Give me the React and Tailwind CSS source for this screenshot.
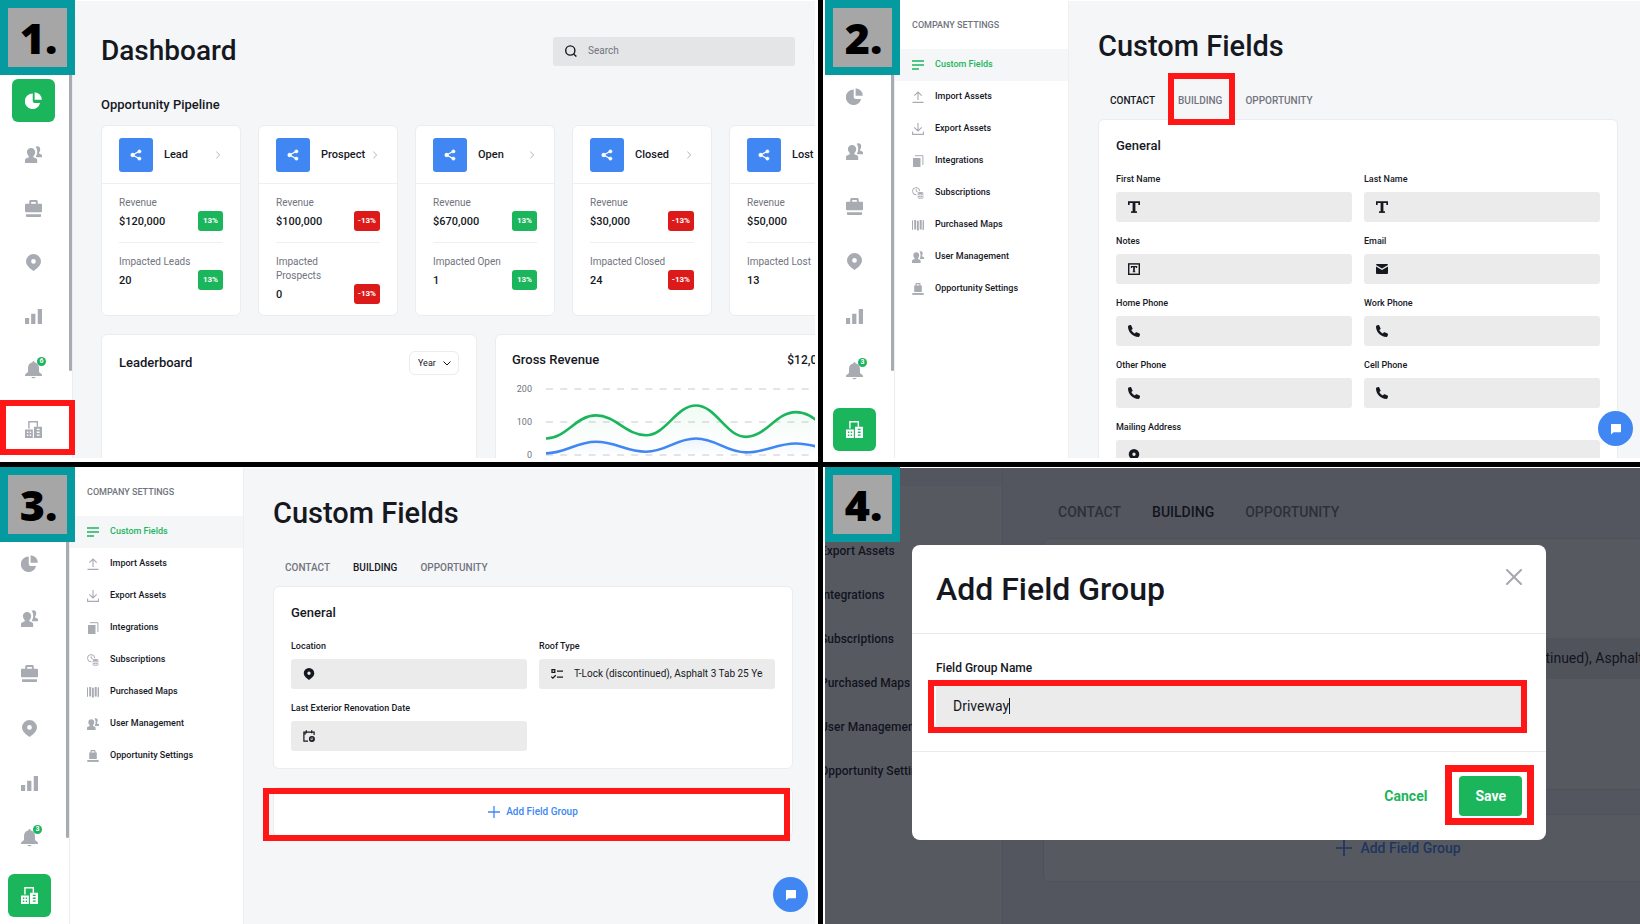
import { useId } from "react";

/* ---------- icons ---------- */

function PieIcon({ className }) {
  return (
    <svg viewBox="0 0 18 18" className={className} fill="currentColor" aria-hidden="true">
      <path d="M8.2 1.6A8.2 8.2 0 1 0 16 11.6H10.4A2.2 2.2 0 0 1 8.2 9.4Z" />
      <path d="M10.2 0.2A8 8 0 0 1 17.8 8.2H10.2Z" />
    </svg>
  );
}

function UsersIcon({ className }) {
  return (
    <svg viewBox="0 0 18 18" className={className} fill="currentColor" aria-hidden="true">
      <path d="M6.4 2C9 2 10.8 3.8 10.8 6.2c0 2-.8 3.700-1.900 4.600v1.200l3 1.200c.7.3 1 .8 1 1.600V18H0v-3.200c0-.8.400-1.300 1.100-1.600l2.900-1.200v-1.200C2.900 9.900 2 8.200 2 6.200 2 3.800 3.800 2 6.400 2Z" />
      <path d="M11.200.9c.5-.4 1.200-.6 1.900-.6 1.900 0 3 1.300 3 3.200 0 1.500-.5 2.700-1.200 3.400v1l2.300 1c.5.200.8.600.8 1.200V11.900h-5.600l-1-.500c1-1.400 1.500-3.200 1.500-5.200 0-2.100-.600-3.900-1.700-5.300Z" />
    </svg>
  );
}

function BriefcaseIcon({ className }) {
  return (
    <svg viewBox="0 0 18 18" className={className} fill="currentColor" aria-hidden="true">
      <path d="M4.500 4V1.500C4.500.6 5.100 0 6 0h6c.9 0 1.500.6 1.500 1.500V4H17c.6 0 1 .400 1 1v7c0 .600-.4 1-1 1H1c-.6 0-1-.4-1-1V5c0-.6.4-1 1-1Zm2 0h5V2h-5Z" fillRule="evenodd" />
      <path d="M1 15h16v2c0 .6-.4 1-1 1H2c-.6 0-1-.4-1-1Z" />
    </svg>
  );
}

function PinIcon({ className }) {
  return (
    <svg viewBox="0 0 18 18" className={className} fill="currentColor" aria-hidden="true">
      <path fillRule="evenodd" d="M9 0a7.900 7.900 0 0 1 7.900 7.900c0 4.300-4.100 7.300-7.900 10.100C5.200 15.200 1.100 12.200 1.100 7.900A7.900 7.900 0 0 1 9 0Zm0 5.400a2.500 2.500 0 1 0 0 5 2.500 2.500 0 0 0 0-5Z" />
    </svg>
  );
}

function BarsIcon({ className }) {
  return (
    <svg viewBox="0 0 18 18" className={className} fill="currentColor" aria-hidden="true">
      <path d="M0 10.500h4.400V17H0ZM6.500 6H11v11H6.500ZM13.500 1H18v16h-4.500Z" />
    </svg>
  );
}

function BellIcon({ className }) {
  return (
    <svg viewBox="0 1 18 18" className={className} fill="currentColor" overflow="visible" aria-hidden="true">
      <path d="M8 .8C8 .3 8.400 0 9 0s1 .3 1 .8v.5c2.800.5 4.800 2.800 4.800 5.700v4.600l2.600 2.200c.4.300.6.700.6 1.200v.8H0V15c0-.500.2-.9.6-1.200l2.600-2.200V7c0-2.900 2-5.200 4.800-5.700Z" />
      <path d="M6.600 16.800h4.800A2.500 2.500 0 0 1 9 18.200a2.500 2.500 0 0 1-2.400-1.400Z" />
    </svg>
  );
}

function BuildingIcon({ className }) {
  return (
    <svg viewBox="0 0 18 18" className={className} fill="currentColor" aria-hidden="true">
      <path d="M3.400 0h10.400v6h-1.500V1.500H4.900V8H3.400Z" />
      <path fillRule="evenodd" d="M0 9h8.300v9H0Zm2 2.200v1.600h1.500v-1.600Zm3 0v1.600h1.500v-1.600Zm-3 3v1.600h1.500v-1.600Zm3 0v1.600h1.500v-1.600Z" />
      <path fillRule="evenodd" d="M9.500 6H18v12H9.500Zm3 2.200v1.400h3V8.200Zm0 3v1.400h3v-1.400Zm0 3v1.400h3v-1.400Z" />
    </svg>
  );
}

function LinesIcon({ className }) {
  return (
    <svg viewBox="0 0 12 12" className={className} stroke="currentColor" strokeWidth="1.400" aria-hidden="true">
      <path d="M0 2h12M0 6h12M0 10h7" />
    </svg>
  );
}

function UploadIcon({ className }) {
  return (
    <svg viewBox="0 0 12 12" className={className} fill="none" stroke="currentColor" strokeWidth="1.100" aria-hidden="true">
      <path d="M.5 11.400h11M6 9V1M2.300 4.600 6 1l3.700 3.600" />
    </svg>
  );
}

function DownloadIcon({ className }) {
  return (
    <svg viewBox="0 0 12 12" className={className} fill="none" stroke="currentColor" strokeWidth="1.100" aria-hidden="true">
      <path d="M.6 8.500v2.900h10.800V8.500M6 0v7.500M2.300 4.300 6 8l3.700-3.700" />
    </svg>
  );
}

function CopyIcon({ className }) {
  return (
    <svg viewBox="0 0 12 12" className={className} aria-hidden="true">
      <path d="M1 3h7.500v9H1Z" fill="currentColor" />
      <path d="M3 .700h7.900V10" fill="none" stroke="currentColor" strokeWidth="1" />
    </svg>
  );
}

function CoinsIcon({ className }) {
  return (
    <svg viewBox="0 0 12 12" className={className} fill="none" stroke="currentColor" strokeWidth="1" aria-hidden="true">
      <path d="M4.400 7.800A3.600 3.600 0 1 1 7.700 4.200M4.200 2.300v2l1.500.6" />
      <ellipse cx="8.500" cy="6" rx="3" ry="1.100" fill="currentColor" stroke="none" />
      <path d="M5.600 7.300c1 .8 4.800.8 5.900 0M5.600 9c1 .9 4.800.9 5.900 0M5.600 10.600c1 .9 4.800.9 5.900 0" />
    </svg>
  );
}

function MapIcon({ className }) {
  return (
    <svg viewBox="0 0 12 12" className={className} fill="currentColor" aria-hidden="true">
      <path d="M0 1.800 1 1v9.500l-1 .8ZM2.200 1h2v9.500h-2ZM5 1.800h1.800v9.700H5ZM7.700 1h2v9.500h-2ZM10.600 1.800 12 1v9.500l-1.400.9Z" />
    </svg>
  );
}

function BagIcon({ className }) {
  return (
    <svg viewBox="0 0 12 12" className={className} fill="currentColor" aria-hidden="true">
      <path fillRule="evenodd" d="M3.500 2.500V.8c0-.4.300-.8.800-.8h3.400c.5 0 .8.400.8.800v1.700h1.300V9H2.200V2.500Zm1.200 0h2.600V1.200H4.700Z" />
      <path d="M.3 10h11.400v1.900H.3Z" />
    </svg>
  );
}

function TextIcon({ className }) {
  return (
    <svg viewBox="0 0 12 12" className={className} fill="none" stroke="currentColor" aria-hidden="true">
      <path d="M.8 4V1.200h10.400V4" strokeWidth="1.700" />
      <path d="M6 1v10" strokeWidth="2.800" />
      <path d="M3 11.100h6" strokeWidth="1.600" />
    </svg>
  );
}

function TextBoxIcon({ className }) {
  return (
    <svg viewBox="0 0 12 12" className={className} fill="none" stroke="currentColor" aria-hidden="true">
      <rect x=".7" y=".9" width="10.600" height="10.400" strokeWidth="1.400" />
      <path d="M3.400 4.900V3.600h5.200v1.300M4.700 8.800h2.600" strokeWidth="1.100" />
      <path d="M6 3.500v5.300" strokeWidth="1.700" />
    </svg>
  );
}

function MailIcon({ className }) {
  return (
    <svg viewBox="0 0 12 12" className={className} fill="currentColor" aria-hidden="true">
      <path d="M.9 1h10.200c.5 0 .9.400.9.900L6 5.400 0 1.900C0 1.400.4 1 .9 1Z" />
      <path d="m0 3.400 6 3.500 6-3.500v6.700c0 .5-.4.900-.9.900H.9c-.5 0-.9-.4-.9-.9Z" />
    </svg>
  );
}

function PhoneIcon({ className }) {
  return (
    <svg viewBox="0 0 12 12" className={className} fill="currentColor" aria-hidden="true">
      <path d="M3.100.2 4.500 3.300c.2.400.1.700-.2 1l-1 .8c.700 1.500 2 2.700 3.500 3.500l.9-1.100c.3-.300.6-.4 1-.2l2.800 1.300c.400.2.6.6.500 1l-.4 1.500c-.1.400-.5.800-1 .8C4.800 12 0 7.200 0 1.500 0 1 .3.600.8.500L2.200 0c.4 0 .7-.1.900.2Z" />
    </svg>
  );
}

function ChecklistIcon({ className }) {
  return (
    <svg viewBox="0 0 12 12" className={className} fill="none" stroke="currentColor" strokeWidth="1.300" aria-hidden="true">
      <path d="M1 1.700h2.800v2.700H1ZM.2 8.600 1.900 10.200 4.700 7.200M6 3.200h6M6 9.200h6" />
    </svg>
  );
}

function CalendarIcon({ className }) {
  return (
    <svg viewBox="0 0 12 12" className={className} fill="none" stroke="currentColor" strokeWidth="1.200" aria-hidden="true">
      <path d="M5 11.200H.9V2.100H11.100V5M.9 3.800h2M3.300.3v3M8.700.3v3" />
      <circle cx="8.900" cy="8.900" r="2.200" strokeWidth="1.600" />
      <path d="M8.700 7.600v1.500h1.500" strokeWidth=".8" />
    </svg>
  );
}

function ShareIcon({ className }) {
  return (
    <svg viewBox="0 0 12 12" className={className} fill="currentColor" stroke="currentColor" aria-hidden="true">
      <path d="M9.300 2.300 2.700 6l6.600 3.700" fill="none" strokeWidth="1.300" />
      <circle cx="9.400" cy="2.400" r="1.700" strokeWidth=".4" />
      <circle cx="2.600" cy="6" r="1.900" strokeWidth=".4" />
      <circle cx="9.400" cy="9.600" r="1.700" strokeWidth=".4" />
    </svg>
  );
}

function SearchIcon({ className }) {
  return (
    <svg viewBox="0 0 12 12" className={className} fill="none" stroke="currentColor" strokeWidth="1.400" aria-hidden="true">
      <circle cx="5.300" cy="5.500" r="4.600" />
      <path d="m8.600 8.900 2.800 2.600" />
    </svg>
  );
}

function PlusIcon({ className }) {
  return (
    <svg viewBox="0 0 12 12" className={className} stroke="currentColor" strokeWidth="1.300" aria-hidden="true">
      <path d="M6 0v12M0 6h12" />
    </svg>
  );
}

function ChatIcon({ className }) {
  return (
    <svg viewBox="0 0 12 12" className={className} fill="currentColor" aria-hidden="true">
      <path d="M1.600 1h8.800c.4 0 .6.200.6.600v7c0 .4-.2.600-.6.600H3.500L1 11.500V1.600c0-.4.200-.6.600-.6Z" />
    </svg>
  );
}

/* ---------- shared parts ---------- */

function StepBadge({ children }) {
  return (
    <div className="absolute left-0 top-0 z-20 flex size-[75px] items-center justify-center border-8 border-[#049a9f] bg-[#a6a6a6] pl-[2px] font-['Open_Sans',sans-serif] text-[43px] leading-none font-extrabold text-black">
      {children}
    </div>
  );
}

function Highlight({ className }) {
  return <div className={`pointer-events-none absolute z-10 border-[#ff1616] ${className}`} />;
}

function ChatButton() {
  return (
    <button
      type="button"
      aria-label="Chat"
      className="absolute right-[7px] bottom-3 flex size-[35px] items-center justify-center rounded-full bg-[#4087f4] text-white"
    >
      <ChatIcon className="size-3" />
    </button>
  );
}

const railItems = [
  ["Dashboard", PieIcon],
  ["Contacts", UsersIcon],
  ["Jobs", BriefcaseIcon],
  ["Locations", PinIcon],
  ["Reports", BarsIcon],
  ["Notifications", BellIcon],
];

function RailButton({ label, Icon, active, count }) {
  return (
    <button
      type="button"
      aria-label={label}
      className={`relative flex size-[43px] shrink-0 items-center justify-center rounded-md ${
        active ? "bg-[#1bb55c] text-white" : "text-[#a9abb3]"
      }`}
    >
      <Icon className="size-[17px]" />
      {count && (
        <span className="absolute top-2 left-[25px] flex size-[9px] items-center justify-center rounded-full bg-[#1bb55c] text-[7px] leading-none font-bold text-white">
          {count}
        </span>
      )}
    </button>
  );
}

function Rail({ active, count, className, listClassName }) {
  return (
    <nav className={`relative shrink-0 border-r border-[#ebecee] bg-white ${className}`}>
      <div className={`flex flex-col ${listClassName}`}>
        {railItems.map(([label, Icon]) => (
          <RailButton
            key={label}
            label={label}
            Icon={Icon}
            active={active === label}
            count={label === "Notifications" ? count : null}
          />
        ))}
      </div>
      <div className="absolute bottom-[7px]">
        <RailButton label="Company" Icon={BuildingIcon} active={active === "Company"} />
      </div>
      <div className="absolute top-0 right-0 h-[370px] w-[3px] rounded-b-full bg-[#a9abb3]" />
    </nav>
  );
}

/* ---------- dashboard ---------- */

const stages = [
  { name: "Lead", revenue: "$120,000", label: "Impacted Leads", value: "20", change: "13%" },
  { name: "Prospect", revenue: "$100,000", label: "Impacted Prospects", value: "0", change: "-13%" },
  { name: "Open", revenue: "$670,000", label: "Impacted Open", value: "1", change: "13%" },
  { name: "Closed", revenue: "$30,000", label: "Impacted Closed", value: "24", change: "-13%" },
  { name: "Lost", revenue: "$50,000", label: "Impacted Lost", value: "13" },
];

function Metric({ label, value, change, className }) {
  return (
    <div className={`flex items-end justify-between ${className}`}>
      <div>
        <div className="text-[10px] leading-[14px] text-[#71747e]">{label}</div>
        <div className="mt-[3px] text-[11px] leading-[18px] font-medium">{value}</div>
      </div>
      {change && (
        <span
          className={`shrink-0 rounded-[3px] text-[8px] leading-5 font-bold text-white ${
            change.startsWith("-") ? "bg-[#dc1a1a] px-1" : "bg-[#1bb55c] px-[5px]"
          }`}
        >
          {change}
        </span>
      )}
    </div>
  );
}

function StageCard({ stage }) {
  return (
    <article className="w-[140px] shrink-0 rounded-md border border-[#ebecee] bg-white">
      <header className="flex h-[58px] items-center border-b border-[#efeff1] pr-5 pl-[17px]">
        <span className="flex size-[34px] shrink-0 items-center justify-center rounded-[3px] bg-[#4087f4] text-white">
          <ShareIcon className="size-3" />
        </span>
        <h3 className="ml-[11px] text-[11px] leading-4 font-medium">{stage.name}</h3>
        <svg viewBox="0 0 4 8" className="ml-auto h-2 w-1 text-[#b5b6bb]" fill="none" stroke="currentColor" aria-hidden="true">
          <path d="M.3.500 3.600 4 .3 7.500" />
        </svg>
      </header>
      <div className="px-[17px]">
        <Metric className="border-b border-[#efeff1] pt-3 pb-[11px]" label="Revenue" value={stage.revenue} change={stage.change} />
        <Metric className="pt-3 pb-[11px]" label={stage.label} value={stage.value} change={stage.change} />
      </div>
    </article>
  );
}

const green = [50, 120, 60, 150, 55, 130, 60];
const blue = [5, 40, 10, 50, 8, 35, 10];

function curve(values) {
  const x = (i) => 34 + i * 50;
  const y = (v) => 86 - v * 0.33;
  return values
    .map((v, i) =>
      i === 0
        ? `M${x(0)} ${y(v)}`
        : `C${x(i) - 30} ${y(values[i - 1])} ${x(i) - 20} ${y(v)} ${x(i)} ${y(v)}`
    )
    .join("");
}

function RevenueChart() {
  return (
    <svg viewBox="0 0 342 96" className="block h-24 w-[342px] overflow-visible" aria-label="Gross revenue">
      <defs>
        <linearGradient id="greenFade" x1="0" y1="0" x2="0" y2="1">
          <stop offset="0" stopColor="#1bb55c" stopOpacity=".06" />
          <stop offset="1" stopColor="#1bb55c" stopOpacity="0" />
        </linearGradient>
        <linearGradient id="blueFade" x1="0" y1="0" x2="0" y2="1">
          <stop offset="0" stopColor="#4087f4" stopOpacity=".08" />
          <stop offset="1" stopColor="#4087f4" stopOpacity="0" />
        </linearGradient>
      </defs>
      {[200, 100, 0].map((tick, i) => (
        <g key={tick}>
          <text x="20" y={23 + i * 33} textAnchor="end" className="fill-[#71747e] text-[9px]">
            {tick}
          </text>
          <path d={`M34 ${20 + i * 33}H342`} stroke="#c9cacd" strokeDasharray="7 7.200" />
        </g>
      ))}
      <path d={`${curve(green)}V86H34Z`} fill="url(#greenFade)" />
      <path d={`${curve(blue)}V86H34Z`} fill="url(#blueFade)" />
      <path d={curve(green)} fill="none" stroke="#1bb55c" strokeWidth="2.600" />
      <path d={curve(blue)} fill="none" stroke="#4087f4" strokeWidth="2.600" />
    </svg>
  );
}

function Dashboard() {
  return (
    <section className="relative min-w-0 overflow-hidden bg-white pt-px pr-[3px] pb-1">
      <div className="relative flex h-full overflow-hidden">
        <Rail active="Dashboard" count="6" className="w-[73px] pl-3" listClassName="gap-[11px] pt-[78px]" />
        <main className="min-w-0 flex-1 overflow-hidden bg-[#f5f6f8] pt-8 pl-7">
          <header className="flex h-9 items-center">
            <h1 className="text-[28px] leading-9 font-medium">Dashboard</h1>
            <label className="ml-auto flex h-[29px] w-[242px] items-center rounded-[3px] bg-[#e4e5e7] px-3">
              <SearchIcon className="size-3 shrink-0" />
              <input
                type="search"
                aria-label="Search"
                placeholder="Search"
                className="ml-[11px] w-full bg-transparent text-[10px] leading-4 outline-none placeholder:text-[#71747e]"
              />
            </label>
            <button
              type="button"
              aria-label="More"
              className="-mr-[27px] ml-[18px] size-[29px] shrink-0 rounded-md border border-[#ebecee] bg-white"
            />
          </header>
          <h2 className="mt-[27px] text-[13px] leading-[18px] font-medium">Opportunity Pipeline</h2>
          <div className="mt-[11px] flex gap-[17px]">
            {stages.map((stage) => (
              <StageCard key={stage.name} stage={stage} />
            ))}
          </div>
          <div className="mt-[18px] flex gap-[18px]">
            <article className="h-64 w-[376px] shrink-0 rounded-md border border-[#ebecee] bg-white px-[17px] py-4">
              <header className="flex h-6 items-center justify-between">
                <h2 className="text-[13px] leading-[18px] font-medium">Leaderboard</h2>
                <label className="relative">
                  <select
                    aria-label="Period"
                    className="block h-6 w-[50px] appearance-none rounded-md border border-[#ebecee] bg-white pl-2 text-[9px] leading-4 outline-none"
                  >
                    <option>Year</option>
                  </select>
                  <svg viewBox="0 0 8 5" className="pointer-events-none absolute top-[10px] right-2 h-[5px] w-2" fill="none" stroke="currentColor" aria-hidden="true">
                    <path d="M.5.500 4 4 7.500.500" />
                  </svg>
                </label>
              </header>
            </article>
            <article className="h-64 w-[376px] shrink-0 rounded-md border border-[#ebecee] bg-white p-4">
              <header className="flex items-center justify-between leading-[18px] font-medium">
                <h2 className="text-[13px]">Gross Revenue</h2>
                <span className="text-[12px]">$12,000,000</span>
              </header>
              <RevenueChart />
            </article>
          </div>
        </main>
        <Highlight className="top-[399px] left-0 h-[55px] w-[75px] border-[6px]" />
      </div>
      <StepBadge>1.</StepBadge>
    </section>
  );
}

/* ---------- settings ---------- */

const menuItems = [
  ["Custom Fields", LinesIcon],
  ["Import Assets", UploadIcon],
  ["Export Assets", DownloadIcon],
  ["Integrations", CopyIcon],
  ["Subscriptions", CoinsIcon],
  ["Purchased Maps", MapIcon],
  ["User Management", UsersIcon],
  ["Opportunity Settings", BagIcon],
];

const tabs = ["CONTACT", "BUILDING", "OPPORTUNITY"];

function SettingsMenu() {
  return (
    <aside className="w-[174px] shrink-0 border-r border-[#efeff1] bg-white pt-[18px]">
      <h2 className="pl-[17px] text-[9px] leading-3 font-medium text-[#71747e]">COMPANY SETTINGS</h2>
      <ul className="mt-[18px]">
        {menuItems.map(([label, Icon], i) => (
          <li key={label}>
            <a
              href="#"
              className={`flex h-8 items-center gap-[11px] pl-[17px] text-[9px] font-medium ${
                i === 0 ? "bg-[#f5f6f8] text-[#1bb55c]" : ""
              }`}
            >
              <Icon className={`size-3 ${i === 0 ? "" : "text-[#a9abb3]"}`} />
              {label}
            </a>
          </li>
        ))}
      </ul>
    </aside>
  );
}

function Field({ label, Icon, value, wide }) {
  const id = useId();
  return (
    <div className={wide ? "col-span-2" : ""}>
      <label htmlFor={id} className="block text-[9px] leading-3 font-medium">
        {label}
      </label>
      <div className="mt-[7px] flex h-[30px] items-center gap-[11px] rounded-[3px] bg-[#ebebeb] px-3">
        <Icon className="size-3 shrink-0" />
        <input id={id} defaultValue={value} className="w-full min-w-0 bg-transparent text-[10px] leading-4 outline-none" />
      </div>
    </div>
  );
}

function Settings({ step, tab, fields, addGroup, className, children }) {
  return (
    <section className={`relative min-w-0 overflow-hidden bg-white pt-px ${className}`}>
      <div className="relative h-full">
        <div className="flex h-full overflow-hidden">
          <Rail active="Company" count="3" className="w-[70px] pl-2" listClassName="gap-3 pt-[74px]" />
          <SettingsMenu />
          <main className="min-w-0 flex-1 bg-[#f5f6f8] pt-[27px] pr-[22px] pl-[29px]">
            <h1 className="text-[29px] leading-9 font-medium">Custom Fields</h1>
            <div role="tablist" className="mt-[30px] flex gap-[23px] pl-3 text-[10px] leading-[14px] font-medium">
              {tabs.map((name) => (
                <button key={name} type="button" role="tab" aria-selected={name === tab} className={name === tab ? "" : "text-[#71747e]"}>
                  {name}
                </button>
              ))}
            </div>
            <section className="mt-[11px] rounded-md border border-[#ebecee] bg-white p-[17px]">
              <h2 className="text-[13px] leading-[18px] font-medium">General</h2>
              <div className="mt-[18px] grid grid-cols-2 gap-x-3 gap-y-[13px]">
                {fields.map((field) => (
                  <Field key={field.label} {...field} />
                ))}
              </div>
            </section>
            {addGroup && (
              <button
                type="button"
                className="mt-[18px] flex h-[50px] w-full items-center justify-center gap-[6px] rounded-md border border-[#ebecee] bg-white text-[10px] leading-4 font-medium text-[#4087f4]"
              >
                <PlusIcon className="size-3" />
                Add Field Group
              </button>
            )}
          </main>
        </div>
        <ChatButton />
        {children}
      </div>
      <div className={`pointer-events-none absolute inset-0 ${className}`}>
        <div className="relative">
          <StepBadge>{step}</StepBadge>
        </div>
      </div>
    </section>
  );
}

const contactFields = [
  { label: "First Name", Icon: TextIcon },
  { label: "Last Name", Icon: TextIcon },
  { label: "Notes", Icon: TextBoxIcon },
  { label: "Email", Icon: MailIcon },
  { label: "Home Phone", Icon: PhoneIcon },
  { label: "Work Phone", Icon: PhoneIcon },
  { label: "Other Phone", Icon: PhoneIcon },
  { label: "Cell Phone", Icon: PhoneIcon },
  { label: "Mailing Address", Icon: PinIcon, wide: true },
];

const roofTypes = "T-Lock (discontinued), Asphalt 3 Tab 25 Year";

const buildingFields = [
  { label: "Location", Icon: PinIcon },
  { label: "Roof Type", Icon: ChecklistIcon, value: roofTypes },
  { label: "Last Exterior Renovation Date", Icon: CalendarIcon },
];

/* ---------- dialog ---------- */

function PageBehindDialog() {
  return (
    <div className="flex h-full overflow-hidden" aria-hidden="true">
      <aside className="w-[178px] shrink-0 overflow-hidden border-r border-[#e6e7e9] bg-white">
        <div className="h-[18px] bg-[#f5f6f8]" />
        <ul className="mt-[43px] -ml-[5px] text-[12px] font-medium whitespace-nowrap">
          {menuItems.slice(2).map(([label]) => (
            <li key={label} className="flex h-11 items-center">
              {label}
            </li>
          ))}
        </ul>
      </aside>
      <div className="min-w-0 flex-1 overflow-hidden bg-[#f5f6f8] pt-[35px] pl-10">
        <div className="flex gap-[31px] pl-[15px] text-[14px] leading-[18px] font-medium whitespace-nowrap">
          <span className="text-[#71747e]">CONTACT</span>
          <span>BUILDING</span>
          <span className="text-[#71747e]">OPPORTUNITY</span>
        </div>
        <div className="mt-[17px] h-[252px] w-[711px] rounded-md border border-[#e3e4e6] bg-white pt-[99px] pl-[364px]">
          <div className="flex h-[41px] w-[323px] items-center bg-[#ebebeb] pl-[47px] text-[14px] whitespace-nowrap">
            {roofTypes}
          </div>
        </div>
        <div className="mt-6 flex h-[68px] w-[711px] items-center justify-center gap-2 rounded-md border border-[#e3e4e6] bg-white text-[14px] font-medium text-[#4087f4]">
          <PlusIcon className="size-4" />
          Add Field Group
        </div>
      </div>
    </div>
  );
}

function AddGroupStep() {
  return (
    <section className="relative min-w-0 overflow-hidden bg-white pt-px pl-[2px]">
      <div className="relative h-full overflow-hidden">
        <PageBehindDialog />
        <div className="absolute inset-0 flex items-center justify-center bg-[#10131e]/70 pr-[7px] pb-2">
          <div role="dialog" aria-labelledby="dialog-title" className="relative w-[634px] rounded-lg bg-white">
            <header className="flex justify-between border-b border-[#e9eaec] px-6 py-6">
              <h2 id="dialog-title" className="text-[32px] leading-10 font-medium">
                Add Field Group
              </h2>
              <button type="button" aria-label="Close" className="size-4 text-[#a5a7b0]">
                <svg viewBox="0 0 16 16" className="size-4" stroke="currentColor" strokeWidth="2" strokeLinecap="round" aria-hidden="true">
                  <path d="M1 1l14 14M15 1 1 15" />
                </svg>
              </button>
            </header>
            <div className="px-6 pt-[26px] pb-6">
              <label htmlFor="group-name" className="block text-[12px] leading-4 font-medium">
                Field Group Name
              </label>
              <div className="mt-[9px] flex h-[42px] items-center rounded-[3px] bg-[#ebebeb] px-[17px]">
                <input
                  id="group-name"
                  defaultValue="Driveway"
                  className="field-sizing-content bg-transparent text-[14px] leading-5 outline-none"
                />
                <span className="h-4 w-px bg-[#16181f]" />
              </div>
            </div>
            <footer className="flex items-center justify-end gap-8 border-t border-[#e9eaec] px-6 py-6 text-[14px] leading-5 font-bold">
              <button type="button" className="text-[#1bb55c]">
                Cancel
              </button>
              <button type="button" className="h-10 rounded bg-[#1bb55c] px-4 text-white">
                Save
              </button>
            </footer>
            <Highlight className="top-[135px] left-4 h-[53px] w-[599px] border-[6px]" />
            <Highlight className="right-3 bottom-[15px] h-[60px] w-[89px] border-[7px]" />
          </div>
        </div>
      </div>
      <div className="absolute top-0 left-[2px]">
        <StepBadge>4.</StepBadge>
      </div>
    </section>
  );
}

export default function App() {
  return (
    <div className="grid h-screen grid-cols-[minmax(0,818fr)_minmax(0,817fr)] grid-rows-[minmax(0,462fr)_minmax(0,457fr)] gap-[5px] bg-black font-[Roboto,sans-serif] text-[#16181f]">
      <Dashboard />
      <Settings step="2." tab="CONTACT" fields={contactFields} className="pb-1 pl-[2px]">
        <Highlight className="top-[72px] left-[343px] h-[52px] w-[67px] border-[6px]" />
      </Settings>
      <Settings step="3." tab="BUILDING" fields={buildingFields} addGroup className="pr-[3px]">
        <Highlight className="top-[320px] left-[263px] h-[53px] w-[527px] border-[6px]" />
      </Settings>
      <AddGroupStep />
    </div>
  );
}
